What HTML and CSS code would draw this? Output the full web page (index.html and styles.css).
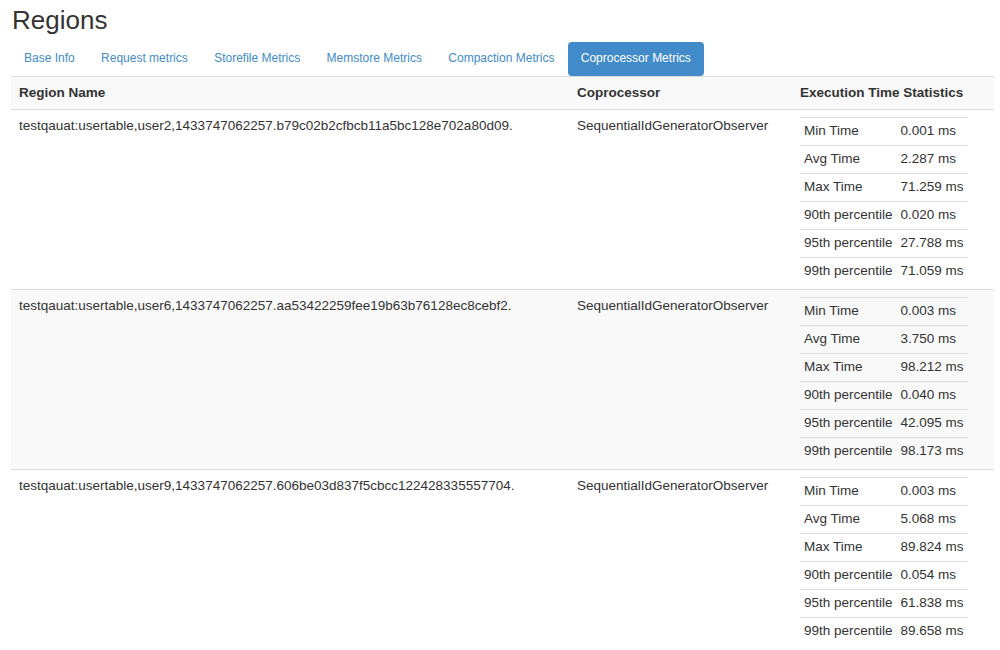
FILE: index.html
```html
<!DOCTYPE html>
<html>
<head>
<meta charset="utf-8">
<title>Regions</title>
<link rel="stylesheet" href="styles.css">
</head>
<body>
<div class="page">
  <h1 class="title">Regions</h1>
  <ul class="tabs">
    <li><a class="tab" href="#">Base Info</a></li>
    <li><a class="tab" href="#">Request metrics</a></li>
    <li><a class="tab" href="#">Storefile Metrics</a></li>
    <li><a class="tab" href="#">Memstore Metrics</a></li>
    <li><a class="tab" href="#">Compaction Metrics</a></li>
    <li><a class="tab active" href="#">Coprocessor Metrics</a></li>
  </ul>
  <table class="regions">
    <tr class="head">
      <th class="c-name">Region Name</th>
      <th class="c-cp">Coprocessor</th>
      <th class="c-stats">Execution Time Statistics</th>
    </tr>
    <tr>
      <td>testqauat:usertable,user2,1433747062257.b79c02b2cfbcb11a5bc128e702a80d09.</td>
      <td>SequentialIdGeneratorObserver</td>
      <td class="stats-cell">
        <table class="stats">
          <tr><td>Min Time</td><td>0.001 ms</td></tr>
          <tr><td>Avg Time</td><td>2.287 ms</td></tr>
          <tr><td>Max Time</td><td>71.259 ms</td></tr>
          <tr><td>90th percentile</td><td>0.020 ms</td></tr>
          <tr><td>95th percentile</td><td>27.788 ms</td></tr>
          <tr><td>99th percentile</td><td>71.059 ms</td></tr>
        </table>
      </td>
    </tr>
    <tr class="striped">
      <td>testqauat:usertable,user6,1433747062257.aa53422259fee19b63b76128ec8cebf2.</td>
      <td>SequentialIdGeneratorObserver</td>
      <td class="stats-cell">
        <table class="stats">
          <tr><td>Min Time</td><td>0.003 ms</td></tr>
          <tr><td>Avg Time</td><td>3.750 ms</td></tr>
          <tr><td>Max Time</td><td>98.212 ms</td></tr>
          <tr><td>90th percentile</td><td>0.040 ms</td></tr>
          <tr><td>95th percentile</td><td>42.095 ms</td></tr>
          <tr><td>99th percentile</td><td>98.173 ms</td></tr>
        </table>
      </td>
    </tr>
    <tr>
      <td>testqauat:usertable,user9,1433747062257.606be03d837f5cbcc122428335557704.</td>
      <td>SequentialIdGeneratorObserver</td>
      <td class="stats-cell">
        <table class="stats">
          <tr><td>Min Time</td><td>0.003 ms</td></tr>
          <tr><td>Avg Time</td><td>5.068 ms</td></tr>
          <tr><td>Max Time</td><td>89.824 ms</td></tr>
          <tr><td>90th percentile</td><td>0.054 ms</td></tr>
          <tr><td>95th percentile</td><td>61.838 ms</td></tr>
          <tr><td>99th percentile</td><td>89.658 ms</td></tr>
        </table>
      </td>
    </tr>
  </table>
</div>
</body>
</html>
```

FILE: styles.css
```css
html, body {
  margin: 0;
  padding: 0;
  background: #fff;
}

body {
  font-family: "Liberation Sans", Arial, Helvetica, sans-serif;
  font-size: 13.5px;
  line-height: 18px;
  color: #333;
}

.page {
  padding: 0 6px 0 11px;
}

.title {
  margin: 6px 0 0 1px;
  font-size: 26px;
  font-weight: normal;
  line-height: 28.6px;
  color: #333;
}

.tabs {
  list-style: none;
  margin: 7.4px 0 0 0;
  padding: 0;
  display: flex;
  gap: 0.4px;
  height: 34px;
}

.tab {
  display: block;
  padding: 9.5px 13px;
  font-size: 12px;
  line-height: 15px;
  color: #428bca;
  text-decoration: none;
  border-radius: 4px;
}

.tab.active {
  background: #428bca;
  color: #fff;
}

.regions {
  width: 983px;
  border-collapse: collapse;
  border-spacing: 0;
}

.regions > tbody > tr > th,
.regions > tbody > tr > td {
  border-top: 1px solid #ddd;
  padding: 7px 8px;
  text-align: left;
  vertical-align: top;
}

.regions > tbody > tr > th {
  font-weight: bold;
}

.regions > tbody > tr > td {
  padding: 7px 8px 4px 8px;
}

.regions .head,
.regions .striped {
  background: #f9f9f9;
}

.c-name { width: 542px; }
.c-cp { width: 207px; }
.c-stats { width: auto; }

.stats {
  border-collapse: collapse;
  border-spacing: 0;
}

.stats td {
  border-top: 1px solid #ddd;
  padding: 4px 4px 5px 4px;
  white-space: nowrap;
}
```
